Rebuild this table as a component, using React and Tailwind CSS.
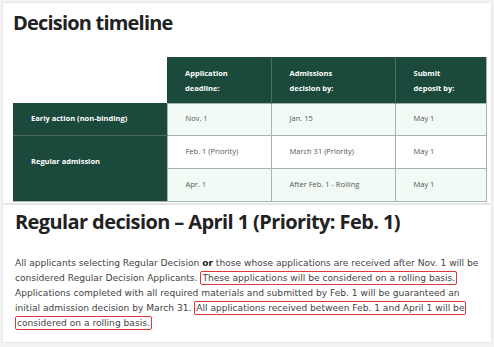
const rows = [
  { date: 'Nov. 1', decision: 'Jan. 15', deposit: 'May 1', tint: true },
  { date: 'Feb. 1 (Priority)', decision: 'March 31 (Priority)', deposit: 'May 1', tint: false },
  { date: 'Apr. 1', decision: 'After Feb. 1 - Rolling', deposit: 'May 1', tint: true },
];

const Boxed = ({ children }) => (
  <span className="border-[1.5px] border-[#e0353a] rounded-[2px] px-[1px] py-[1px]">{children}</span>
);

const App = () => {
  const cell = 'border border-[#a9b3ae] px-[18px] text-[7.5px] text-[#555] whitespace-nowrap';
  const head = 'border-l border-[#4d6c61] bg-[#1b4a3c] px-[18px] pt-[9px] text-left align-top text-[7.5px] font-bold leading-[15px] text-white';

  return (
    <div className="h-[347px] w-[494px] overflow-hidden bg-[#f3f3f3] px-[3px] pt-[3px] font-['DejaVu_Sans',sans-serif]">
      {/* Timeline card */}
      <div className="h-[200px] bg-white px-[10px] shadow-[0_0_2px_rgba(0,0,0,0.15)] font-['Open_Sans',sans-serif]">
        <h2 className="pt-[8px] text-[20px] font-bold leading-[24px] tracking-[-0.8px] text-[#222]">
          Decision timeline
        </h2>
        <table className="mt-[22px] w-[473px] table-fixed border-collapse">
          <colgroup>
            <col className="w-[154px]" />
            <col className="w-[104px]" />
            <col className="w-[124px]" />
            <col className="w-[91px]" />
          </colgroup>
          <thead>
            <tr className="h-[46px]">
              <th className="bg-white"></th>
              <th className={head + ' border-l-0'}>Application<br />deadline:</th>
              <th className={head}>Admissions<br />decision by:</th>
              <th className={head + ' border-r border-r-[#a9b3ae]'}>Submit<br />deposit by:</th>
            </tr>
          </thead>
          <tbody>
            {rows.map((r, i) => (
              <tr key={i} className={i === 0 ? 'h-[32px]' : 'h-[33px]'}>
                {i === 0 && (
                  <td className="border-b border-[#4d6c61] bg-[#1b4a3c] px-[18px] text-[7.5px] font-bold whitespace-nowrap text-white">
                    Early action (non-binding)
                  </td>
                )}
                {i === 1 && (
                  <td rowSpan={2} className="border-b border-[#a9b3ae] bg-[#1b4a3c] px-[18px] pb-[12px] text-[7.5px] font-bold text-white">
                    Regular admission
                  </td>
                )}
                <td className={`${cell} ${r.tint ? 'bg-[#f2faf6]' : 'bg-white'}`}>{r.date}</td>
                <td className={`${cell} ${r.tint ? 'bg-[#f2faf6]' : 'bg-white'}`}>{r.decision}</td>
                <td className={`${cell} ${r.tint ? 'bg-[#f2faf6]' : 'bg-white'}`}>{r.deposit}</td>
              </tr>
            ))}
          </tbody>
        </table>
      </div>

      {/* Regular decision card */}
      <div className="mt-[2px] h-[137px] bg-white px-[12px] shadow-[0_0_2px_rgba(0,0,0,0.15)]">
        <h2 className="pt-[5px] font-['Open_Sans',sans-serif] text-[20px] font-bold leading-[24px] tracking-[-0.6px] text-[#222]">
          Regular decision – April 1 (Priority: Feb. 1)
        </h2>
        <div className="mt-[22px] whitespace-nowrap text-[9.1px] leading-[15px] text-[#444]">
          <div>All applicants selecting Regular Decision <b className="text-[#222]">or</b> those whose applications are received after Nov. 1 will be</div>
          <div>considered Regular Decision Applicants. <Boxed>These applications will be considered on a rolling basis.</Boxed></div>
          <div>Applications completed with all required materials and submitted by Feb. 1 will be guaranteed an</div>
          <div>initial admission decision by March 31. <Boxed>All applications received between Feb. 1 and April 1 will be</Boxed></div>
          <div><Boxed>considered on a rolling basis.</Boxed></div>
        </div>
      </div>
    </div>
  );
};

export default App;
